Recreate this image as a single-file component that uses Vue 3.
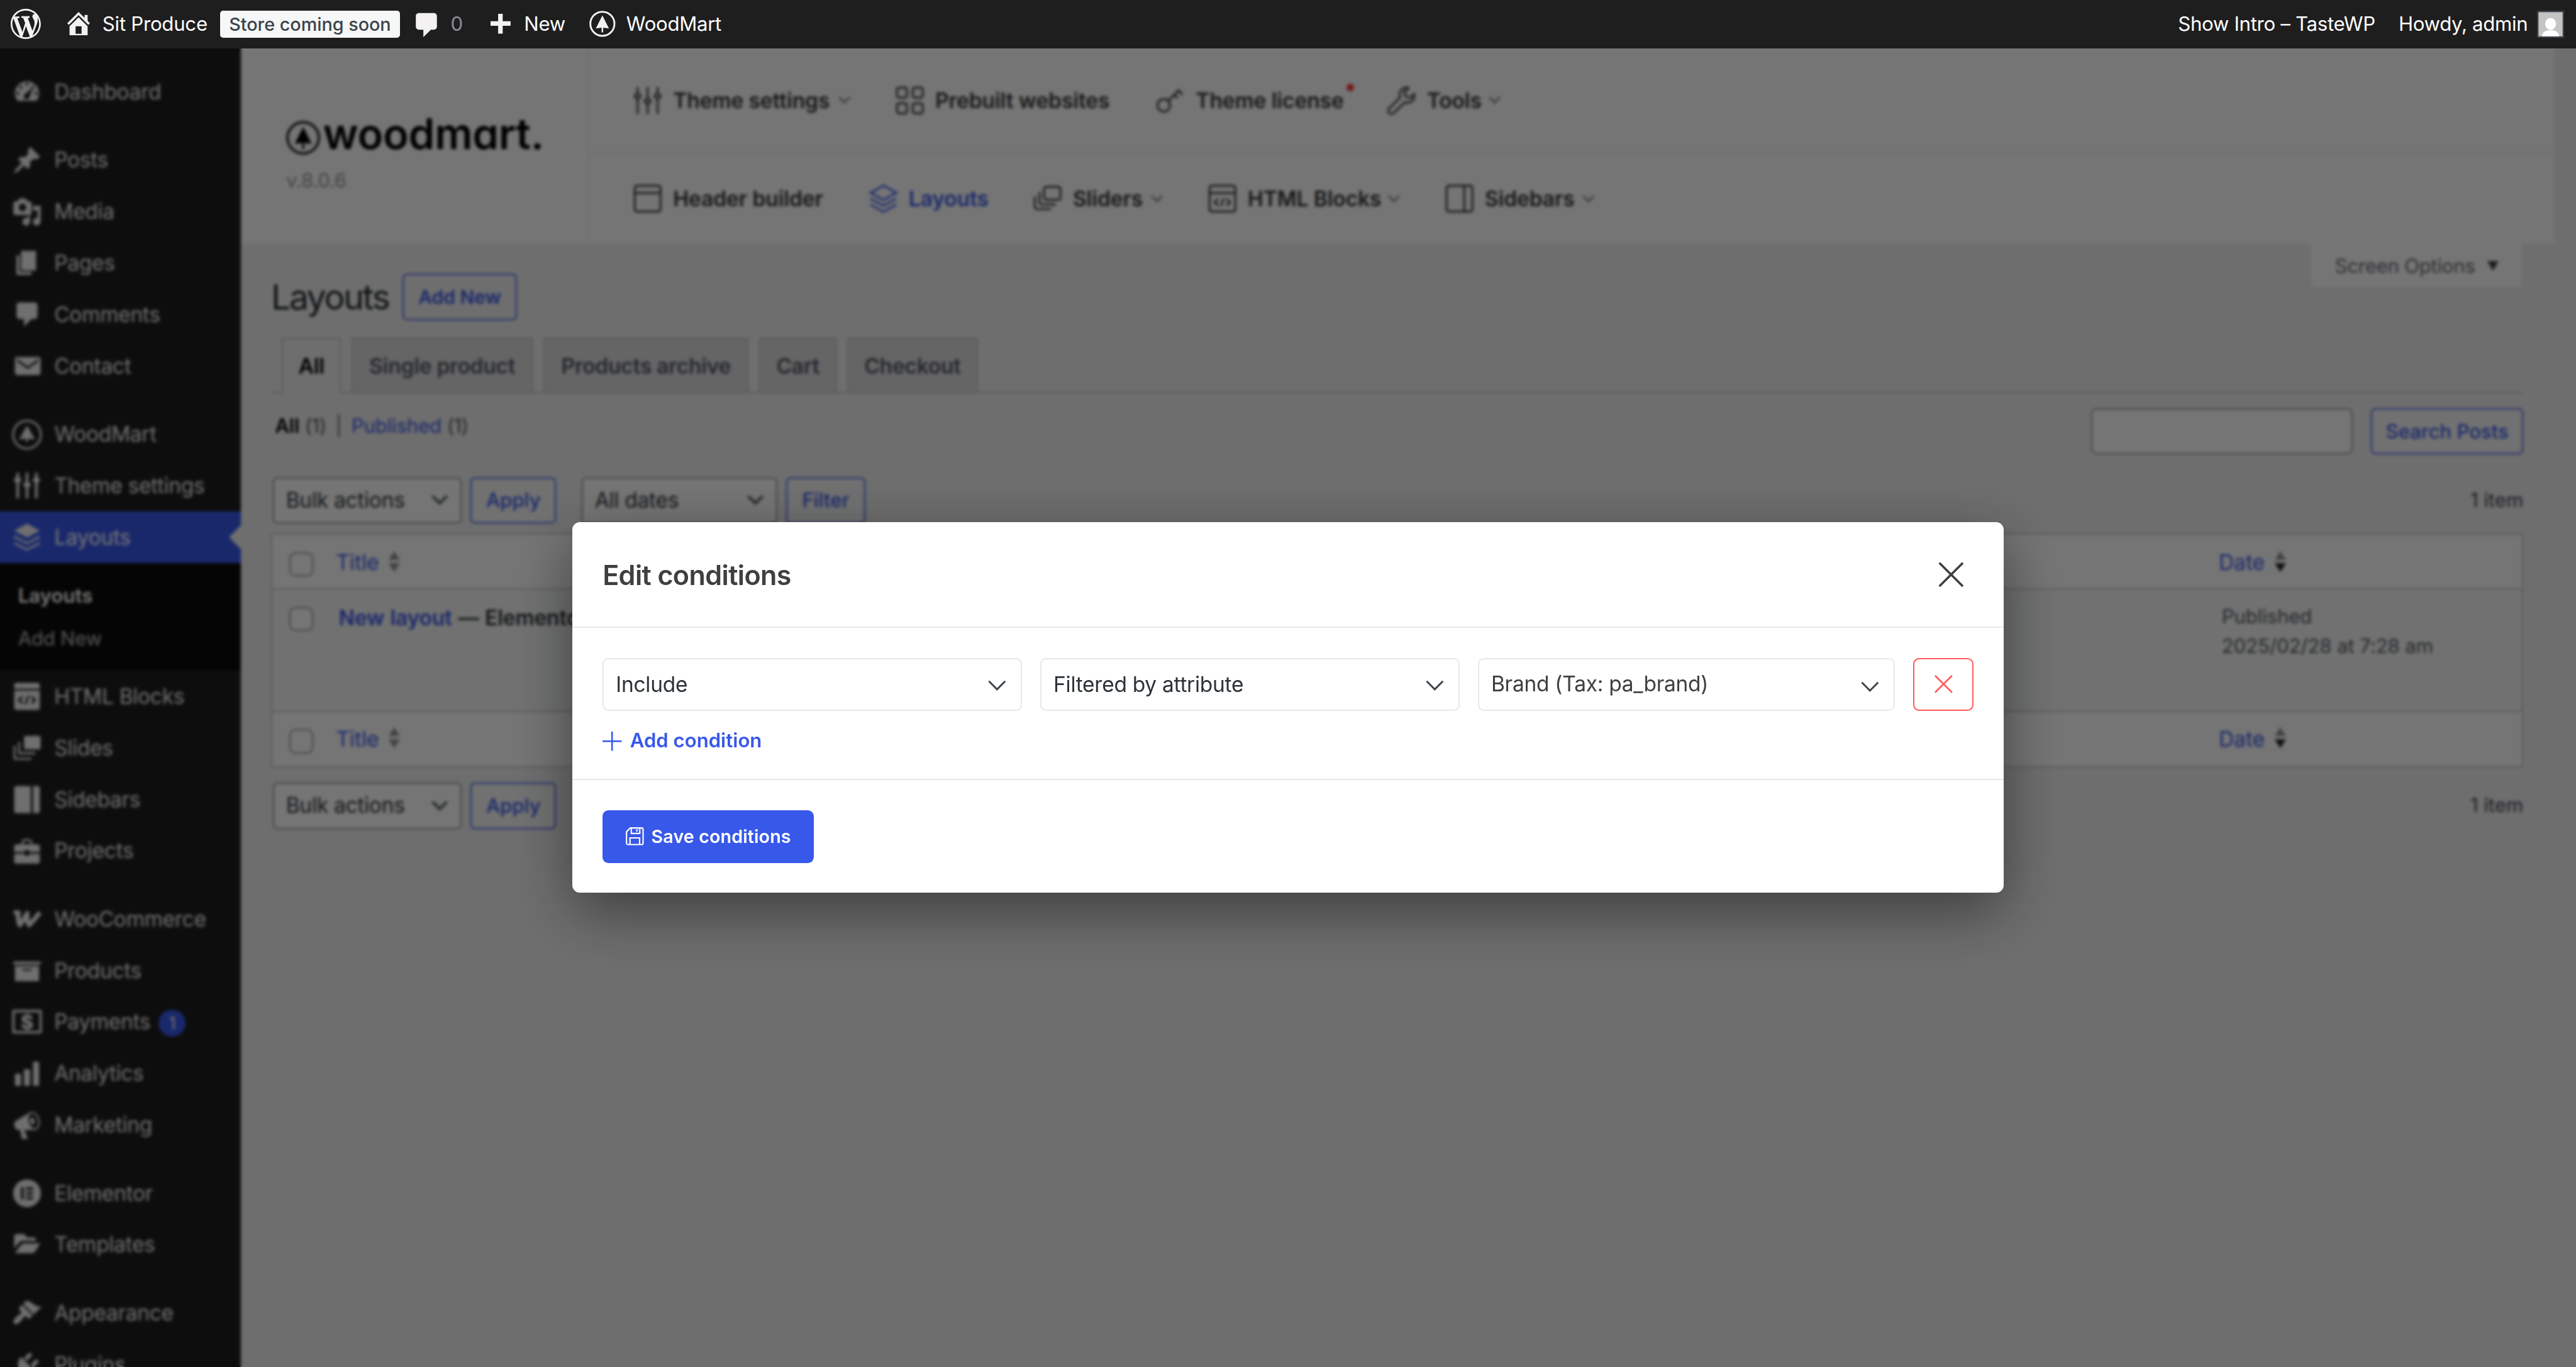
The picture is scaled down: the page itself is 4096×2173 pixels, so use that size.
<template>
  <div class="screen">
    <header class="admin-bar">
      <div class="bar-left">
        <svg class="bar-wp" viewBox="0 0 20 20"><path :d="icons.wordpress.fill" /></svg>
        <svg class="bar-home" viewBox="0 0 20 20"><path fill-rule="evenodd" :d="icons.home.fill" /></svg>
        <span class="bar-site">Sit Produce</span>
        <span class="bar-badge">Store coming soon</span>
        <svg class="bar-comment" viewBox="0 0 20 20"><path :d="icons.comments.fill" /></svg>
        <span class="bar-count">0</span>
        <svg class="bar-plus" viewBox="0 0 14 14"><path d="M5.3 0h3.2v5.2H14v3.2H8.500v5.400H5.300V8.400H0V5.200h5.300z" /></svg>
        <span class="bar-new">New</span>
        <svg class="bar-tree" viewBox="0 0 20 20">
          <circle cx="10" cy="10" r="9.200" fill="none" stroke="currentColor" stroke-width="1.400" />
          <path :d="treePath" />
        </svg>
        <span class="bar-theme">WoodMart</span>
      </div>
      <div class="bar-right">
        <span class="bar-intro">Show Intro – TasteWP</span>
        <span class="bar-howdy">Howdy, admin</span>
        <svg class="avatar" viewBox="0 0 18 18">
          <rect width="18" height="18" fill="#3c434a" />
          <rect x="1" y="1" width="16" height="16" fill="#c4c4c4" />
          <ellipse cx="9" cy="8.800" rx="3.600" ry="4" fill="#fff" />
          <path d="M3.200 17c.3-2.600 2-3.400 4-3.900h3.600c2 .5 3.700 1.300 4 3.900z" fill="#fff" />
        </svg>
      </div>
    </header>

    <div class="page">
      <nav class="side-menu">
        <template v-for="(group, i) in menu" :key="i">
          <div v-for="item in group" :key="item.label">
            <a class="menu-item" :class="{ current: item.current }">
              <svg class="menu-icon" viewBox="0 0 20 20">
                <path v-if="icons[item.icon].fill" fill-rule="evenodd" :d="icons[item.icon].fill" />
                <path v-if="icons[item.icon].line" class="line" :stroke-width="icons[item.icon].width" :d="icons[item.icon].line" />
                <path v-if="icons[item.icon].cut" class="cut" :d="icons[item.icon].cut" />
                <text v-if="item.icon === 'payments'" x="10" y="14.600" text-anchor="middle" class="dollar">$</text>
              </svg>
              <span>{{ item.label }}</span>
              <span v-if="item.badge" class="menu-badge">{{ item.badge }}</span>
            </a>
            <div v-if="item.children" class="submenu">
              <a v-for="(child, n) in item.children" :key="child" :class="{ active: n === 0 }">{{ child }}</a>
            </div>
          </div>
          <div class="separator"></div>
        </template>
      </nav>

      <main class="main">
        <div class="theme-header">
          <div class="brand">
            <div class="logo">
              <svg viewBox="0 0 20 20">
                <circle cx="10" cy="10" r="9.200" fill="none" stroke="#222" stroke-width="1.500" />
                <path :d="treePath" />
              </svg>
              <span>woodmart.</span>
            </div>
            <span class="version">v.8.0.6</span>
          </div>
          <div class="theme-nav">
            <div v-for="(row, r) in themeNav" :key="r" class="nav-row">
              <a v-for="item in row" :key="item.label" class="nav-item" :class="{ active: item.active }" :style="{ width: item.width + 'px' }">
                <svg class="nav-icon" viewBox="0 0 20 20"><path :d="navIcons[item.icon]" /></svg>
                <span class="nav-label">{{ item.label }}</span>
                <i v-if="item.dot" class="dot"></i>
                <svg v-if="item.more" class="nav-more" viewBox="0 0 8 5"><path d="M.5.5 4 4.200 7.500.5" /></svg>
              </a>
            </div>
          </div>
        </div>

        <div class="options-row">
          <div class="screen-options">
            <span>Screen Options</span>
            <svg viewBox="0 0 8 8"><path d="M0 .5h8L4 7.500z" /></svg>
          </div>
        </div>

        <div class="wrap">
          <div class="title-row">
            <h1>Layouts</h1>
            <button class="button add-new">Add New</button>
          </div>

          <div class="tabs">
            <a v-for="tab in tabs" :key="tab.label" :class="{ active: tab.active }" :style="{ width: tab.width + 'px' }">{{ tab.label }}</a>
          </div>

          <div class="filter-row">
            <div class="views">
              <b>All</b><span class="n">(1)</span><span class="bar">|</span><a>Published</a><span class="n">(1)</span>
            </div>
            <div class="search">
              <div class="search-input"></div>
              <button class="button search-btn">Search Posts</button>
            </div>
          </div>

          <div class="tablenav top">
            <div class="select bulk"><span>Bulk actions</span><svg viewBox="0 0 20 20"><path :d="arrowDown" /></svg></div>
            <button class="button apply">Apply</button>
            <div class="select dates"><span>All dates</span><svg viewBox="0 0 20 20"><path :d="arrowDown" /></svg></div>
            <button class="button filter">Filter</button>
            <span class="count">1 item</span>
          </div>

          <div class="table">
            <div v-for="part in ['head', 'body', 'foot']" :key="part" class="row" :class="part">
              <i class="checkbox"></i>
              <template v-if="part !== 'body'">
                <div class="col-title"><a>Title</a><svg viewBox="0 0 8 16"><path d="M4 .5 8 6.700H0z" /><path d="M0 9h8L4 15.300z" /></svg></div>
                <div class="col-date"><a>Date</a><svg viewBox="0 0 8 16"><path d="M4 .5 8 6.700H0z" /><path class="on" d="M0 9h8L4 15.300z" /></svg></div>
              </template>
              <template v-else>
                <div class="col-title"><strong><a>New layout</a> — Elementor</strong></div>
                <div class="col-date">Published<br>2025/02/28 at 7:28 am</div>
              </template>
            </div>
          </div>

          <div class="tablenav bottom">
            <div class="select bulk"><span>Bulk actions</span><svg viewBox="0 0 20 20"><path :d="arrowDown" /></svg></div>
            <button class="button apply">Apply</button>
            <span class="count">1 item</span>
          </div>
        </div>
      </main>
    </div>

    <div class="overlay">
      <div class="modal">
        <div class="modal-header">
          <h2>Edit conditions</h2>
          <svg class="close" viewBox="0 0 17 17"><path d="M.7.700 16.300 16.300M16.300.700.700 16.300" /></svg>
        </div>
        <div class="modal-body">
          <div class="condition">
            <div v-for="field in fields" :key="field" class="field">
              <span>{{ field }}</span>
              <svg viewBox="0 0 12 7"><path d="M.6.700 6 6.200 11.400.700" /></svg>
            </div>
            <button class="remove"><svg viewBox="0 0 12 12"><path d="M.4.400 11.600 11.600M11.600.400.400 11.600" /></svg></button>
          </div>
          <a class="add-condition">
            <svg viewBox="0 0 13 13"><path d="M6.500 0v13M0 6.500h13" /></svg>
            <span>Add condition</span>
          </a>
        </div>
        <div class="modal-footer">
          <button class="save">
            <svg viewBox="0 0 12 12"><path d="M3 .5h7.500a1 1 0 0 1 1 1v9a1 1 0 0 1-1 1h-9a1 1 0 0 1-1-1V3zM3.700.5v3.600h5.600V.5M7.400 1.300v1.600M2.800 11.500V7.100h6.400v4.400" /></svg>
            <span>Save conditions</span>
          </button>
        </div>
      </div>
    </div>
  </div>
</template>

<script setup>
const treePath = 'M10 3.600 15 13.600l-4.400-.7V16.600H9.400v-3.700L5 13.600z'
const arrowDown = 'M5 6l5 5 5-5 2 1-7 7-7-7 2-1z'

const icons = {
  wordpress: {
    fill: 'M20 10c0-5.510-4.490-10-10-10C4.480 0 0 4.490 0 10c0 5.520 4.480 10 10 10 5.510 0 10-4.480 10-10zM7.780 15.370L4.370 6.220c.55-.02 1.170-.08 1.170-.08.5-.06.44-1.130-.06-1.110 0 0-1.450.11-2.370.11-.18 0-.37 0-.58-.01C4.120 2.690 6.870 1.110 10 1.110c2.330 0 4.450.87 6.050 2.340-.68-.11-1.650.39-1.650 1.580 0 .74.45 1.360.9 2.100.35.61.55 1.360.55 2.460 0 1.490-1.400 5-1.400 5l-3.030-8.370c.54-.02.82-.17.82-.17.5-.05.44-1.250-.06-1.220 0 0-1.440.12-2.380.12-.87 0-2.330-.12-2.330-.12-.5-.03-.56 1.200-.06 1.220l.92.08 1.260 3.410zM17.410 10c.24-.64.74-1.870.43-4.250.7 1.290 1.050 2.710 1.050 4.250 0 3.290-1.730 6.240-4.400 7.780.97-2.590 1.940-5.200 2.920-7.780zM6.100 18.090C3.120 16.650 1.110 13.530 1.110 10c0-1.300.23-2.480.72-3.590C3.250 10.300 4.670 14.200 6.100 18.090zm4.030-6.630l2.580 6.980c-.86.29-1.760.45-2.710.45-.79 0-1.570-.11-2.290-.33.81-2.380 1.620-4.740 2.420-7.100z'
  },
  home: { fill: 'M16 8.500l1.530 1.530-1.060 1.060L10 4.600l-6.470 6.490-1.060-1.060L10 2.500l4 4v-2h2v4zm-6-2.460l6 5.990V18H4v-5.970zM12 17v-5H8v5h4z' },
  dashboard: {
    fill: 'M3.760 16h12.480A7.998 7.998 0 0 0 10 3a7.998 7.998 0 0 0-6.240 13zM10 4c.55 0 1 .45 1 1s-.45 1-1 1-1-.45-1-1 .45-1 1-1zM6 6c.55 0 1 .45 1 1s-.45 1-1 1-1-.45-1-1 .45-1 1-1zm8 0c.55 0 1 .45 1 1s-.45 1-1 1-1-.45-1-1 .45-1 1-1zm-5.370 5.550L14 7l-2.200 6c-.3 1.100-.9 2-2 2s-2-.9-2-2c0-.57.44-1.080.83-1.450zM4 10c.55 0 1 .45 1 1s-.45 1-1 1-1-.45-1-1 .45-1 1-1zm12 0c.55 0 1 .45 1 1s-.45 1-1 1-1-.45-1-1 .45-1 1-1z'
  },
  posts: {
    fill: 'M10.440 3.020l1.820-1.820 6.360 6.350-1.830 1.820c-1.050-.68-2.480-.57-3.410.36l-.75.75c-.92.93-1.040 2.350-.35 3.410l-1.830 1.820-2.410-2.410-2.800 2.790c-.42.42-3.380 2.710-3.800 2.290s1.860-3.390 2.280-3.810l2.790-2.790L4.100 9.360l1.830-1.820c1.050.69 2.480.57 3.400-.36l.75-.75c.93-.92 1.050-2.350.36-3.410z'
  },
  media: {
    fill: 'M13 11V4c0-.55-.45-1-1-1h-1.670L9 1H5L3.670 3H2c-.55 0-1 .45-1 1v7c0 .55.45 1 1 1h10c.55 0 1-.45 1-1zM7 4.500c1.380 0 2.500 1.120 2.500 2.500S8.380 9.500 7 9.500 4.500 8.380 4.500 7 5.620 4.500 7 4.500zM14 6h5v10.500c0 1.380-1.120 2.500-2.500 2.500S14 17.880 14 16.500s1.120-2.500 2.500-2.500c.17 0 .34.02.5.05V9h-3V6zm-4 8.050V13h2v3.500c0 1.380-1.120 2.500-2.500 2.500S7 17.880 7 16.500 8.120 14 9.500 14c.17 0 .34.02.5.05z'
  },
  pages: { fill: 'M6 15V2h10v13H6zm-1 1h8v2H3V5h2v11z' },
  comments: { fill: 'M5 2h10c1.100 0 2 .9 2 2v7c0 1.100-.9 2-2 2h-2l-5 5v-5H5c-1.100 0-2-.9-2-2V4c0-1.100.9-2 2-2z' },
  contact: {
    fill: 'M3.500 4h14c.8 0 1.500.7 1.500 1.500v9c0 .8-.7 1.500-1.500 1.500h-14c-.8 0-1.500-.7-1.500-1.500v-9C2 4.700 2.700 4 3.500 4z',
    cut: 'M3.600 6.200l6.900 5 6.900-5'
  },
  woodmart: { fill: 'M10 4 15.200 13.200l-4.500-.6V14.600H9.300v-2L4.800 13.200z', line: 'M10 .8a9.200 9.200 0 1 0 0 18.400a9.200 9.200 0 1 0 0-18.400z', width: 1.3 },
  settings: { fill: 'M3.800 3.500 6.600 6.300 3.800 9.100 1 6.300zM10 6.700l2.800 2.800-2.800 2.800-2.800-2.800zM16.200 3.500 19 6.300l-2.800 2.800-2.800-2.800z', line: 'M3.800 1.500v17M10 1.500v17M16.200 1.500v17', width: 1.8 },
  layouts: { fill: 'M10 1 18.500 5.600 10 10.200 1.500 5.600z', line: 'M1.500 9.600 10 14l8.500-4.400M1.500 13.800 10 18.200l8.500-4.400', width: 1.3 },
  html: { fill: 'M3 1h14a1.500 1.500 0 0 1 1.500 1.500V5h-17V2.500A1.500 1.500 0 0 1 3 1zM1.500 6.200h17v11.300A1.500 1.500 0 0 1 17 19H3a1.500 1.500 0 0 1-1.500-1.500z', cut: 'M7 10 4.700 12.400 7 14.800M13 10l2.300 2.400L13 14.800M11 9.600 9 15.200' },
  slides: { fill: 'M9.200 2h8.600a1.200 1.200 0 0 1 1.200 1.200v6.600a1.200 1.200 0 0 1-1.200 1.200H9.200A1.200 1.200 0 0 1 8 9.800V3.200A1.200 1.200 0 0 1 9.200 2z', line: 'M4.800 6v7.500h10.700M1.700 8.500v8.700H13', width: 1.3 },
  sidebars: { fill: 'M3 1h9.500v18H3a1.500 1.500 0 0 1-1.500-1.500v-15A1.500 1.500 0 0 1 3 1zM14 1h3a1.500 1.500 0 0 1 1.500 1.500v15A1.500 1.500 0 0 1 17 19h-3z' },
  projects: { fill: 'M3 5.500h14a1.500 1.500 0 0 1 1.500 1.500v3.500h-7V9.300h-3v1.200h-7V7A1.500 1.500 0 0 1 3 5.500zM1.500 11.800h7V13h3v-1.200h7v5A1.500 1.500 0 0 1 17 18.300H3a1.500 1.500 0 0 1-1.500-1.500z', line: 'M6.800 5.500C6.800 3 8 2.500 10 2.500s3.200.5 3.200 3', width: 1.3 },
  woo: { line: 'M1.200 5.700h3.100C3.900 9 4 11.500 5.200 14 7.300 11.600 8.600 9 10.100 6.100c-.2 3 .2 5.700 1.300 7.900 2.700-2.600 4.700-5.500 7.100-8.300', width: 3 },
  products: { fill: 'M19 4v2H1V4h18zM2 7h16v10H2V7zm11 3V9H7v1h6z' },
  payments: { line: 'M1 2.600h18v14H1z', width: 1.6 },
  analytics: { fill: 'M18 18V2h-4v16h4zm-6 0V7H8v11h4zm-6 0v-8H2v8h4z' },
  marketing: {
    fill: 'M18.150 5.940c.46 1.620.38 3.220-.02 4.480-.42 1.280-1.260 2.180-2.300 2.480-.16.06-.26.06-.4.06-.06.02-.12.02-.18.02-.06.02-.14.02-.22.02h-6.800l2.220 5.500c.02.14-.06.26-.14.34-.08.1-.24.16-.34.16H6.950c-.1 0-.26-.06-.34-.16-.08-.08-.16-.2-.14-.34l-1-5.500H4.250l-.02-.02c-.5.06-1.080-.18-1.540-.62s-.88-1.080-1.060-1.880c-.24-.8-.2-1.560-.02-2.200.18-.62.58-1.080 1.060-1.300l.02-.02 9-5.400c.1-.06.18-.1.24-.16.06-.04.14-.08.24-.12.16-.08.28-.12.5-.18 1.040-.3 2.240.1 3.220.98s1.840 2.240 2.260 3.860zm-2.580 5.980h-.02c.4-.1.74-.34 1.040-.7.58-.7.86-1.760.86-3.040 0-.64-.1-1.300-.28-1.980-.34-1.360-1.020-2.500-1.780-3.240s-1.680-1.100-2.460-.88c-.82.22-1.400.96-1.700 2-.32 1.040-.28 2.360.06 3.720.38 1.360 1 2.500 1.800 3.240.78.74 1.620 1.100 2.480.88zm-2.540-7.080c.22-.04.42-.02.62.04.38.16.76.48 1.020 1s.42 1.200.42 1.780c0 .3-.04.56-.12.8-.18.48-.44.84-.86.94-.34.1-.8-.06-1.140-.4s-.64-.86-.78-1.500c-.18-.62-.12-1.240.02-1.720s.48-.84.82-.94z'
  },
  elementor: { fill: 'M10 .8a9.200 9.200 0 1 0 0 18.400a9.200 9.200 0 1 0 0-18.400zM6 6h1.800v8H6zM9.400 6H14v1.700H9.400zM9.400 9.150H14v1.700H9.400zM9.400 12.300H14V14H9.400z' },
  templates: { fill: 'M1.500 4.200C1.500 3.300 2 2.800 3 2.800h4.500c1 0 1.500.6 1.900 1.500l.3.700h4.600c1 0 1.600.5 1.700 1.400v.9H7.500c-1.200 0-2 .4-2.800 1.200L1.500 12.300zM2 15.200l3.900-5c.5-.8 1.200-1.200 2-1.200h10.900l-3.400 5.200c-.5.8-1 1.200-1.900 1.200H2z' },
  appearance: {
    fill: 'M14.480 11.060L7.410 3.990l1.500-1.500c.5-.56 2.300-.47 3.510.32 1.210.8 1.430 1.280 2.910 2.100 1.180.64 2.450 1.260 4.450.85zm-.71.71L6.700 4.700 4.930 6.470c-.39.39-.39 1.020 0 1.410l1.060 1.060c.39.39.39 1.030 0 1.420-.6.6-1.430 1.110-2.210 1.690-.35.26-.7.53-1.010.84C1.430 14.230.4 16.080 1.400 17.070c.99 1 2.840-.03 4.180-1.360.31-.31.58-.66.85-1.020.57-.78 1.080-1.610 1.690-2.210.39-.39 1.020-.39 1.410 0l1.060 1.060c.39.39 1.020.39 1.410 0z'
  },
  plugins: {
    fill: 'M13.110 4.360L9.870 7.600 8 5.730l3.240-3.240c.35-.34 1.050-.2 1.560.32.52.51.66 1.210.31 1.550zm-8 1.770l.91-1.120 9.010 9.010-1.190.84c-.71.71-2.630 1.160-3.820 1.160H6.140L4.900 17.260c-.59.59-1.540.59-2.120 0-.59-.58-.59-1.530 0-2.120l1.240-1.240v-3.880c0-1.130.4-3.190 1.090-3.890zm7.260 3.970l3.240-3.240c.34-.35 1.040-.21 1.550.31.52.51.66 1.210.31 1.550l-3.240 3.250z'
  }
}

const navIcons = {
  settings: 'M3 .5v4.200M3 9.300v10.200M10 .5v7.700M10 12.800v6.700M17 .5v4.200M17 9.300v10.200M3 4.700 5.200 7 3 9.300.8 7zM10 8.200l2.200 2.300-2.200 2.300-2.200-2.300zM17 4.700 19.200 7 17 9.300 14.800 7z',
  grid: 'M2.500 1h4A1.500 1.500 0 0 1 8 2.500v4A1.500 1.500 0 0 1 6.500 8h-4A1.500 1.500 0 0 1 1 6.500v-4A1.500 1.500 0 0 1 2.500 1zM13.500 1h4A1.500 1.500 0 0 1 19 2.500v4A1.500 1.500 0 0 1 17.500 8h-4A1.500 1.500 0 0 1 12 6.500v-4A1.500 1.500 0 0 1 13.500 1zM2.500 12h4A1.500 1.500 0 0 1 8 13.500v4A1.500 1.500 0 0 1 6.500 19h-4A1.500 1.500 0 0 1 1 17.500v-4A1.500 1.500 0 0 1 2.500 12zM13.500 12h4a1.500 1.500 0 0 1 1.500 1.500v4a1.500 1.500 0 0 1-1.500 1.500h-4a1.500 1.500 0 0 1-1.500-1.500v-4a1.500 1.500 0 0 1 1.500-1.500z',
  key: 'M5.500 9a4.400 4.400 0 1 0 0 8.800a4.400 4.400 0 1 0 0-8.800zM8.600 10.200 16.500 2.300M15.800 3l2.800 2.900M12.800 6l2.300 2.300',
  wrench: 'M18.800 5.600a4.900 4.900 0 0 1-6.600 5.600l-7.700 7.500a2.200 2.200 0 0 1-3.200-3.200l7.700-7.600A4.900 4.900 0 0 1 14.800 1.200L12 4l.7 3.300L16 8z',
  header: 'M2.500 1h15A1.500 1.500 0 0 1 19 2.500v15a1.500 1.500 0 0 1-1.500 1.500h-15A1.500 1.500 0 0 1 1 17.500v-15A1.500 1.500 0 0 1 2.500 1zM1 6h18',
  layers: 'M10 .9 19 5.900 10 10.900 1 5.900zM1 10l9 5 9-5M1 14.200l9 5 9-5',
  slides: 'M9 1.800h8.500A1.500 1.500 0 0 1 19 3.300v6a1.500 1.500 0 0 1-1.500 1.500H9a1.500 1.500 0 0 1-1.500-1.500v-6A1.500 1.500 0 0 1 9 1.800zM4.300 5.300v7a1.800 1.800 0 0 0 1.800 1.800h9.700M1 8.500v7a1.800 1.800 0 0 0 1.800 1.800h9.700',
  html: 'M2.500 1h15A1.500 1.500 0 0 1 19 2.500v15a1.500 1.500 0 0 1-1.500 1.500h-15A1.500 1.500 0 0 1 1 17.500v-15A1.500 1.500 0 0 1 2.500 1zM1 6h18M7 10l-2.300 2.500L7 15M13 10l2.300 2.500L13 15M11 9.700l-2 5.600',
  sidebars: 'M2.500 1h15A1.500 1.500 0 0 1 19 2.500v15a1.500 1.500 0 0 1-1.500 1.500h-15A1.500 1.500 0 0 1 1 17.500v-15A1.500 1.500 0 0 1 2.500 1zM13.300 1v18'
}

const menu = [
  [{ label: 'Dashboard', icon: 'dashboard' }],
  [
    { label: 'Posts', icon: 'posts' },
    { label: 'Media', icon: 'media' },
    { label: 'Pages', icon: 'pages' },
    { label: 'Comments', icon: 'comments' },
    { label: 'Contact', icon: 'contact' }
  ],
  [
    { label: 'WoodMart', icon: 'woodmart' },
    { label: 'Theme settings', icon: 'settings' },
    { label: 'Layouts', icon: 'layouts', current: true, children: ['Layouts', 'Add New'] },
    { label: 'HTML Blocks', icon: 'html' },
    { label: 'Slides', icon: 'slides' },
    { label: 'Sidebars', icon: 'sidebars' },
    { label: 'Projects', icon: 'projects' }
  ],
  [
    { label: 'WooCommerce', icon: 'woo' },
    { label: 'Products', icon: 'products' },
    { label: 'Payments', icon: 'payments', badge: 1 },
    { label: 'Analytics', icon: 'analytics' },
    { label: 'Marketing', icon: 'marketing' }
  ],
  [
    { label: 'Elementor', icon: 'elementor' },
    { label: 'Templates', icon: 'templates' }
  ],
  [
    { label: 'Appearance', icon: 'appearance' },
    { label: 'Plugins', icon: 'plugins' }
  ]
]

const themeNav = [
  [
    { label: 'Theme settings', icon: 'settings', more: true, width: 144 },
    { label: 'Prebuilt websites', icon: 'grid', width: 143 },
    { label: 'Theme license', icon: 'key', dot: true, width: 123.4 },
    { label: 'Tools', icon: 'wrench', more: true, width: 75.4 }
  ],
  [
    { label: 'Header builder', icon: 'header', width: 126.4 },
    { label: 'Layouts', icon: 'layers', active: true, width: 79 },
    { label: 'Sliders', icon: 'slides', more: true, width: 86 },
    { label: 'HTML Blocks', icon: 'html', more: true, width: 127.4 },
    { label: 'Sidebars', icon: 'sidebars', more: true, width: 99 }
  ]
]

const tabs = [
  { label: 'All', active: true, width: 39.4 },
  { label: 'Single product', width: 120.8 },
  { label: 'Products archive', width: 136.2 },
  { label: 'Cart', width: 51.8 },
  { label: 'Checkout', width: 86.8 }
]

const fields = ['Include', 'Filtered by attribute', 'Brand (Tax: pa_brand)']
</script>

<style>
html,
body {
  margin: 0;
  overflow: hidden;
  background: #6e6e6e;
}
</style>

<style scoped>
.screen {
  zoom: 2.39532;
  position: relative;
  display: flex;
  flex-direction: column;
  width: 1710px;
  height: 907.2px;
  overflow: hidden;
  background: #f0f0f1;
  color: #3c434a;
  font-family: Inter, "Liberation Sans", sans-serif;
  font-size: 13px;
  font-weight: 430;
  line-height: 1.4;
}

.screen * {
  box-sizing: border-box;
}

svg {
  display: block;
  flex-shrink: 0;
  overflow: visible;
}

span,
a {
  white-space: nowrap;
}

button {
  font-family: inherit;
  cursor: pointer;
  margin: 0;
  padding: 0;
}

/* admin bar */
.admin-bar {
  position: relative;
  z-index: 3;
  flex: none;
  display: flex;
  justify-content: space-between;
  height: 32px;
  background: #1e1e1e;
  color: #fff;
}

.admin-bar svg {
  fill: #f3f1f1;
  color: #f3f1f1;
}

.bar-left,
.bar-right {
  display: flex;
  align-items: center;
}

.admin-bar span {
  padding-top: 0.800px;
}

.bar-wp {
  width: 20px;
  height: 20px;
  margin-left: 7px;
}

.bar-home {
  width: 20px;
  height: 20px;
  margin: -1px 0 0 15px;
}

.bar-site {
  width: 77px;
  margin-left: 6px;
  letter-spacing: -0.1px;
}

.admin-bar .bar-badge {
  width: 119.600px;
  height: 18px;
  margin-left: 1px;
  padding-top: 0.300px;
  border-radius: 2px;
  background: #f6f7f7;
  color: #3c434a;
  font-size: 12px;
  font-weight: 500;
  line-height: 18px;
  text-align: center;
}

.bar-comment {
  width: 20px;
  height: 20px;
  margin: 1px 0 0 7.500px;
}

.bar-count {
  width: 20px;
  margin-left: 6px;
  color: #8c8f94;
}

.bar-plus {
  width: 13.300px;
  height: 13.300px;
  margin-left: 6.500px;
}

.bar-new {
  width: 30px;
  margin-left: 9px;
  letter-spacing: -0.1px;
}

.bar-tree {
  width: 17.400px;
  height: 17.400px;
  margin-left: 13.500px;
}

.bar-theme {
  margin-left: 7px;
  letter-spacing: -0.12px;
}

.bar-right {
  margin-right: 8px;
  letter-spacing: -0.12px;
}

.bar-howdy {
  margin-left: 15.500px;
}

.avatar {
  width: 18px;
  height: 18px;
  margin-left: 6px;
}

/* side menu */
.page {
  display: flex;
  flex: 1;
  min-height: 0;
}

.side-menu {
  width: 160px;
  flex: none;
  padding-top: 12px;
  background: #1e1e1e;
  overflow: hidden;
}

.menu-item {
  position: relative;
  display: flex;
  align-items: center;
  height: 34.200px;
  padding-left: 8px;
  color: #f0f0f1;
  font-size: 14px;
  letter-spacing: -0.14px;
}

.menu-item.current {
  background: #3858e9;
  color: #fff;
}

.menu-item.current::after {
  content: "";
  position: absolute;
  right: 0;
  top: 9px;
  border: 8px solid transparent;
  border-left: 0;
  border-right-color: #f0f0f1;
}

.menu-icon {
  width: 20px;
  height: 20px;
  margin-right: 8px;
  fill: #f3f1f1;
}

.menu-icon .line {
  fill: none;
  stroke: #f3f1f1;
  stroke-linejoin: round;
}

.menu-icon .cut {
  fill: none;
  stroke: #1e1e1e;
  stroke-width: 1.300;
}

.dollar {
  font-size: 13px;
  font-weight: 800;
}

.menu-badge {
  width: 18px;
  height: 18px;
  margin: 1px 0 0 5.500px;
  border-radius: 9px;
  background: #3858e9;
  color: #fff;
  font-size: 11px;
  line-height: 18px;
  text-align: center;
}

.submenu {
  padding: 8px 0 7px;
  background: #0c0c0c;
}

.submenu a {
  display: block;
  padding: 5px 12px;
  color: #bcbcbc;
  letter-spacing: -0.1px;
}

.submenu .active {
  color: #fff;
  font-weight: 600;
  letter-spacing: 0;
}

.separator {
  height: 11px;
}

/* theme header */
.main {
  flex: 1;
  min-width: 0;
}

.theme-header {
  display: flex;
  height: 130px;
  margin-right: 14.500px;
  background: #fff;
}

.brand {
  width: 231px;
  padding: 41px 0 0 30px;
  border-right: 1px solid #f0f0f0;
}

.logo {
  display: flex;
  align-items: center;
  height: 36px;
  color: #000;
}

.logo svg {
  width: 22.600px;
  height: 22.600px;
  margin-top: 1px;
}

.logo span {
  margin: -4px 0 0 1.800px;
  font-size: 28px;
  font-weight: 600;
  letter-spacing: -0.12px;
  font-feature-settings: "cv11";
}

.version {
  display: block;
  margin-top: 2px;
  color: #999;
  letter-spacing: -0.1px;
}

.theme-nav {
  flex: 1;
}

.nav-row {
  display: flex;
  align-items: center;
  gap: 30px;
  height: 60px;
  padding-left: 29.500px;
}

.nav-row:first-child {
  height: 70px;
  border-bottom: 1px solid #f0f0f0;
}

.nav-item {
  position: relative;
  display: flex;
  align-items: center;
  color: #333;
  font-size: 14px;
  font-weight: 600;
}

.nav-item.active {
  color: #3858e9;
}

.nav-icon {
  width: 19px;
  height: 19px;
  margin-right: 7.300px;
}

.nav-icon path,
.nav-more path {
  fill: none;
  stroke: currentColor;
  stroke-width: 1.300;
}

.nav-label {
  flex: 1;
  padding-top: 0.500px;
  letter-spacing: -0.04px;
}

.nav-more {
  width: 8px;
  height: 5px;
  color: #888;
}

.dot {
  position: absolute;
  top: -1px;
  right: -8px;
  width: 5px;
  height: 5px;
  border-radius: 50%;
  background: #f33;
}

.options-row {
  display: flex;
  justify-content: flex-end;
  height: 29px;
  margin-right: 36px;
}

.screen-options {
  display: flex;
  align-items: center;
  width: 139.600px;
  padding: 1px 0 0 15.500px;
  border-radius: 0 0 4px 4px;
  background: #fff;
  color: #646970;
  letter-spacing: -0.1px;
}

.screen-options svg {
  width: 7.500px;
  height: 7.500px;
  margin: -1px 0 0 8px;
  fill: #3c434a;
}

/* list page */
.wrap {
  margin: -9.500px 35px 0 20px;
}

.title-row {
  display: flex;
  align-items: center;
  height: 31px;
}

h1 {
  width: 87px;
  margin: 0;
  color: #1d2327;
  font-size: 23px;
  font-weight: 400;
  line-height: 31px;
  letter-spacing: -0.95px;
}

.button {
  height: 30.600px;
  border: 1px solid #3858e9;
  border-radius: 3px;
  background: #f6f7f7;
  color: #3858e9;
  font-size: 13px;
  font-weight: 450;
}

.button.add-new {
  width: 76.300px;
  font-weight: 600;
  font-size: 12.500px;
  background: transparent;
}

.tabs {
  display: flex;
  align-items: flex-end;
  gap: 6.800px;
  height: 48.500px;
  padding-left: 7px;
  border-bottom: 1px solid #c3c4c7;
}

.tabs a {
  height: 36px;
  border: 1px solid #c3c4c7;
  border-bottom: 0;
  background: #dcdcde;
  color: #50575e;
  font-size: 14px;
  font-weight: 600;
  line-height: 36.600px;
  text-align: center;
  letter-spacing: -0.1px;
}

.tabs .active {
  height: 37px;
  margin-bottom: -1px;
  background: #f0f0f1;
  color: #000;
}

.filter-row {
  display: flex;
  justify-content: space-between;
  height: 55.600px;
  padding-top: 10px;
}

.views {
  display: flex;
  padding: 3px 0 0 2.500px;
}

.views b {
  color: #000;
  font-weight: 600;
}

.views a,
.table a {
  color: #3858e9;
}

.views a {
  letter-spacing: -0.05px;
}

.views .n {
  margin-left: 3.600px;
  color: #50575e;
  letter-spacing: -0.2px;
}

.views .bar {
  margin: 0 6.200px;
  color: #646970;
}

.search {
  display: flex;
  gap: 12.400px;
}

.search-input {
  width: 173.600px;
  height: 30.600px;
  border: 1px solid #8c8f94;
  border-radius: 4px;
  background: #fff;
}

.search-btn {
  width: 101px;
}

.tablenav {
  display: flex;
  align-items: center;
  height: 31px;
}

.select {
  display: flex;
  align-items: center;
  justify-content: space-between;
  height: 30.600px;
  padding: 0 5.500px 0 8px;
  border: 1px solid #8c8f94;
  border-radius: 3px;
  background: #fff;
  color: #2c3338;
  font-size: 14px;
}

.select svg {
  width: 16px;
  height: 16px;
  fill: #50575e;
}

.select.bulk {
  width: 125.400px;
  margin: 0 6px 0 1px;
}

.select.dates {
  width: 130px;
  margin: 0 6px 0 16.800px;
}

.select span {
  letter-spacing: -0.12px;
}

.apply {
  width: 56.800px;
}

.filter {
  width: 52.300px;
}

.count {
  margin-left: auto;
}

.table {
  margin: 6.500px 0 10px;
  border: 1px solid #c3c4c7;
  background: #fff;
}

.row {
  display: flex;
  padding-left: 11px;
}

.head {
  height: 36.300px;
  border-bottom: 1px solid #c3c4c7;
}

.body {
  height: 80.500px;
  background: #f6f7f7;
}

.foot {
  height: 36.700px;
  border-top: 1px solid #c3c4c7;
}

.checkbox {
  flex: none;
  width: 16px;
  height: 16px;
  margin-top: 11.500px;
  border: 1px solid #8c8f94;
  border-radius: 4px;
  background: #fff;
}

.col-title {
  flex: none;
  width: 1265px;
  padding-left: 15.200px;
}

.row.head > div,
.row.foot > div {
  display: flex;
  padding-top: 8.800px;
  font-size: 14px;
}

.row.foot > div {
  padding-top: 8.300px;
}

.row svg {
  width: 7.400px;
  height: 15px;
  margin: 1.500px 0 0 6.500px;
  fill: #8c8f94;
}

.row .on {
  fill: #1d2327;
}

.body .col-title {
  padding: 9px 0 0 17px;
  font-size: 14px;
  color: #2c3338;
}

.body strong {
  font-weight: 600;
  letter-spacing: -0.07px;
  word-spacing: 0.500px;
}

.body .col-date {
  padding: 8.500px 0 0 2px;
  color: #50575e;
  line-height: 19.600px;
  letter-spacing: -0.04px;
  white-space: nowrap;
}

/* popup */
.overlay {
  position: absolute;
  z-index: 2;
  top: 32px;
  right: 0;
  bottom: 0;
  left: 0;
  display: flex;
  align-items: center;
  justify-content: center;
  background: rgba(0, 0, 0, 0.54);
  backdrop-filter: blur(1px);
}

.modal {
  width: 950px;
  height: 246px;
  border-radius: 5px;
  background: #fff;
  box-shadow: 0 12px 40px rgba(0, 0, 0, 0.45);
}

.modal-header {
  display: flex;
  align-items: center;
  justify-content: space-between;
  height: 70px;
  padding: 0 26.500px 0 20px;
  border-bottom: 1px solid #e8e8e8;
}

h2 {
  margin: 0;
  padding-top: 0.600px;
  color: #3f3f3f;
  font-size: 18px;
  font-weight: 600;
  line-height: 26px;
  letter-spacing: -0.26px;
}

.close {
  width: 17px;
  height: 17px;
}

.close path {
  fill: none;
  stroke: #3f3f3f;
  stroke-width: 1.500;
}

.modal-body {
  height: 101px;
  padding: 20px;
  border-bottom: 1px solid #e8e8e8;
}

.condition {
  display: grid;
  grid-template-columns: 278.500px 278.500px 277px 40px;
  gap: 12px;
}

.field {
  display: flex;
  align-items: center;
  justify-content: space-between;
  height: 35px;
  padding: 0 9.800px 0 8px;
  border: 1px solid #e8e8e8;
  border-radius: 4px;
  color: #2c3338;
  font-size: 14px;
  letter-spacing: -0.12px;
}

.field span {
  padding-top: 0.600px;
}

.field:nth-child(3) span {
  padding: 0;
  color: #3f3f3f;
}

.field svg {
  width: 12px;
  height: 7px;
  margin-top: 1px;
}

.field path {
  fill: none;
  stroke: #3c434a;
  stroke-width: 1.200;
}

.field:nth-child(3) svg {
  margin-top: 3px;
}

.remove {
  display: flex;
  align-items: center;
  justify-content: center;
  height: 35px;
  border: 1px solid #ff5b5b;
  border-radius: 4px;
  background: #fff;
}

.remove svg {
  width: 12px;
  height: 12px;
}

.remove path {
  stroke: #ff5b5b;
  stroke-width: 1.100;
}

.add-condition {
  display: flex;
  align-items: center;
  gap: 5.500px;
  width: max-content;
  margin-top: 11px;
  color: #3858e9;
  font-weight: 600;
}

.add-condition svg {
  width: 12.700px;
  height: 12.700px;
}

.add-condition path {
  stroke: #3858e9;
  stroke-width: 1.100;
}

.modal-footer {
  padding: 20px;
}

.save {
  display: flex;
  align-items: center;
  justify-content: center;
  gap: 5px;
  width: 140.400px;
  height: 35px;
  border: 0;
  border-radius: 4px;
  background: #3858e9;
  color: #fff;
  font-size: 12px;
  font-weight: 600;
  letter-spacing: 0.03px;
}

.save svg {
  width: 12px;
  height: 12px;
}

.save path {
  fill: none;
  stroke: #fff;
  stroke-width: 0.900;
}
</style>
